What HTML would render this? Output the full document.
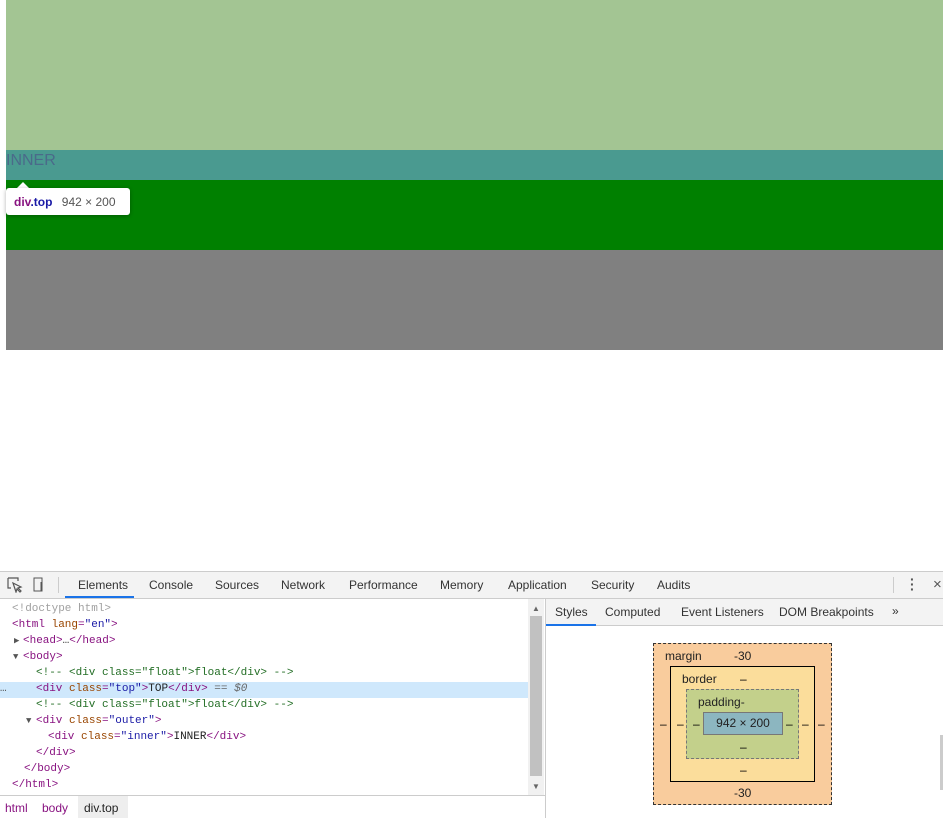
<!DOCTYPE html>
<html><head><style>
*{margin:0;padding:0;box-sizing:border-box}
body{width:943px;height:818px;position:relative;overflow:hidden;background:#fff;font-family:"Liberation Sans",sans-serif;font-size:12px}
.a{position:absolute}
.code{font-family:"Liberation Mono",monospace;font-size:11px;line-height:16px;white-space:pre;color:#881280;position:absolute}
.at{color:#994500}.v{color:#1a1aa6}.c{color:#236e25}.g{color:#a0a0a0}
.tab{position:absolute;top:578px;color:#333;font-size:12px}
.tri{color:#555;font-size:9px}
</style></head><body>
<div class="a" style="left:6px;top:0;width:937px;height:150px;background:#a3c593"></div>
<div class="a" style="left:6px;top:150px;width:937px;height:30px;background:#4a9a90"></div>
<div class="a" style="left:6px;top:152px;font-size:16px;color:#4a6a8a">INNER</div>
<div class="a" style="left:6px;top:180px;width:937px;height:70px;background:#008000"></div>
<div class="a" style="left:6px;top:250px;width:937px;height:100px;background:#808080"></div>
<div class="a" style="left:17px;top:182px;width:0;height:0;border-left:6px solid transparent;border-right:6px solid transparent;border-bottom:6px solid #fff"></div>
<div class="a" style="left:6px;top:188px;width:124px;height:27px;background:#fff;border-radius:3px;box-shadow:0 1px 4px rgba(0,0,0,.3);padding:7px 8px;font-size:12px"><b style="color:#881280">div</b><b style="color:#1a1aa6">.top</b> <span style="color:#555;margin-left:6px">942 × 200</span></div>

<div class="a" style="left:0;top:571px;width:943px;height:28px;background:#f3f3f3;border-top:1px solid #ccc;border-bottom:1px solid #ccc"></div>
<svg class="a" style="left:7px;top:577px" width="40" height="16"><path d="M1 1h10v3M1 1v10h3M6 6l8 4-3 1 3 3-1 1-3-3-1 3z" stroke="#555" fill="none" stroke-width="1.2"/><rect x="27" y="1" width="8" height="13" stroke="#555" fill="none"/><path d="M34 5v9" stroke="#555"/></svg>
<div class="a" style="left:58px;top:577px;width:1px;height:16px;background:#ccc"></div>
<div class="tab" style="left:78px">Elements</div>
<div class="a" style="left:65px;top:596px;width:69px;height:2px;background:#1a73e8"></div>
<div class="tab" style="left:149px">Console</div>
<div class="tab" style="left:215px">Sources</div>
<div class="tab" style="left:281px">Network</div>
<div class="tab" style="left:349px">Performance</div>
<div class="tab" style="left:440px">Memory</div>
<div class="tab" style="left:508px">Application</div>
<div class="tab" style="left:591px">Security</div>
<div class="tab" style="left:657px">Audits</div>
<div class="a" style="left:893px;top:577px;width:1px;height:16px;background:#ccc"></div>
<div class="a" style="left:910px;top:577px;font-weight:bold;color:#555;line-height:5px;font-size:14px">·<br>·<br>·</div>
<div class="a" style="left:933px;top:576px;font-size:15px;color:#555">×</div>

<div class="a" style="left:0;top:682px;width:528px;height:16px;background:#cfe8fc"></div>
<div class="code" style="left:0;top:681px;color:#555">…</div>
<div class="code g" style="left:12px;top:601px">&lt;!doctype html&gt;</div>
<div class="code" style="left:12px;top:617px">&lt;html <span class="at">lang</span>=<span class="v">"en"</span>&gt;</div>
<div class="code tri" style="left:14px;top:633px">▶</div>
<div class="code" style="left:23px;top:633px">&lt;head&gt;<span style="color:#333">…</span>&lt;/head&gt;</div>
<div class="code tri" style="left:13px;top:649px">▼</div>
<div class="code" style="left:23px;top:649px">&lt;body&gt;</div>
<div class="code c" style="left:36px;top:665px">&lt;!-- &lt;div class="float"&gt;float&lt;/div&gt; --&gt;</div>
<div class="code" style="left:36px;top:681px">&lt;div <span class="at">class</span>=<span class="v">"top"</span>&gt;<span style="color:#222">TOP</span>&lt;/div&gt; <span style="color:#666">== <i>$0</i></span></div>
<div class="code c" style="left:36px;top:697px">&lt;!-- &lt;div class="float"&gt;float&lt;/div&gt; --&gt;</div>
<div class="code tri" style="left:26px;top:713px">▼</div>
<div class="code" style="left:36px;top:713px">&lt;div <span class="at">class</span>=<span class="v">"outer"</span>&gt;</div>
<div class="code" style="left:48px;top:729px">&lt;div <span class="at">class</span>=<span class="v">"inner"</span>&gt;<span style="color:#222">INNER</span>&lt;/div&gt;</div>
<div class="code" style="left:36px;top:745px">&lt;/div&gt;</div>
<div class="code" style="left:24px;top:761px">&lt;/body&gt;</div>
<div class="code" style="left:12px;top:777px">&lt;/html&gt;</div>

<div class="a" style="left:528px;top:599px;width:16px;height:197px;background:#f1f1f1"></div>
<div class="a" style="left:530px;top:616px;width:12px;height:160px;background:#c1c1c1"></div>
<div class="a" style="left:532px;top:604px;font-size:8px;color:#666">▲</div>
<div class="a" style="left:532px;top:782px;font-size:8px;color:#666">▼</div>
<div class="a" style="left:0;top:795px;width:545px;height:1px;background:#ccc"></div>
<div class="a" style="left:5px;top:801px;color:#881280">html</div>
<div class="a" style="left:42px;top:801px;color:#881280">body</div>
<div class="a" style="left:78px;top:796px;width:50px;height:22px;background:#eee"></div>
<div class="a" style="left:84px;top:801px;color:#222">div.top</div>

<div class="a" style="left:545px;top:599px;width:1px;height:219px;background:#ccc"></div>
<div class="a" style="left:546px;top:599px;width:397px;height:27px;background:#f3f3f3;border-bottom:1px solid #ccc"></div>
<div class="tab" style="left:555px;top:605px">Styles</div>
<div class="a" style="left:546px;top:624px;width:50px;height:2px;background:#1a73e8"></div>
<div class="tab" style="left:605px;top:605px">Computed</div>
<div class="tab" style="left:681px;top:605px">Event Listeners</div>
<div class="tab" style="left:779px;top:605px">DOM Breakpoints</div>
<div class="tab" style="left:892px;top:604px">»</div>
<div class="a" style="left:940px;top:735px;width:3px;height:55px;background:#ccc"></div>

<div class="a" style="left:653px;top:643px;width:179px;height:162px;background:#f9cc9d;border:1px dashed #333"></div>
<div class="a" style="left:665px;top:649px;color:#222">margin</div>
<div class="a" style="left:734px;top:649px;color:#222">-30</div>
<div class="a" style="left:734px;top:786px;color:#222">-30</div>
<div class="a" style="left:670px;top:666px;width:145px;height:116px;background:#fbdd9b;border:1px solid #000"></div>
<div class="a" style="left:682px;top:672px;color:#222">border</div>
<div class="a" style="left:740px;top:672px">–</div>
<div class="a" style="left:740px;top:763px">–</div>
<div class="a" style="left:686px;top:689px;width:113px;height:70px;background:#c3d08b;border:1px dashed #777"></div>
<div class="a" style="left:698px;top:695px;color:#222">padding-</div>
<div class="a" style="left:703px;top:712px;width:80px;height:23px;background:#8cb6c0;border:1px solid #777;text-align:center;line-height:21px;color:#222">942 × 200</div>
<div class="a" style="left:740px;top:740px">–</div>
<div class="a" style="left:660px;top:717px">–</div><div class="a" style="left:677px;top:717px">–</div><div class="a" style="left:693px;top:717px">–</div>
<div class="a" style="left:786px;top:717px">–</div><div class="a" style="left:802px;top:717px">–</div><div class="a" style="left:818px;top:717px">–</div>
</body></html>
